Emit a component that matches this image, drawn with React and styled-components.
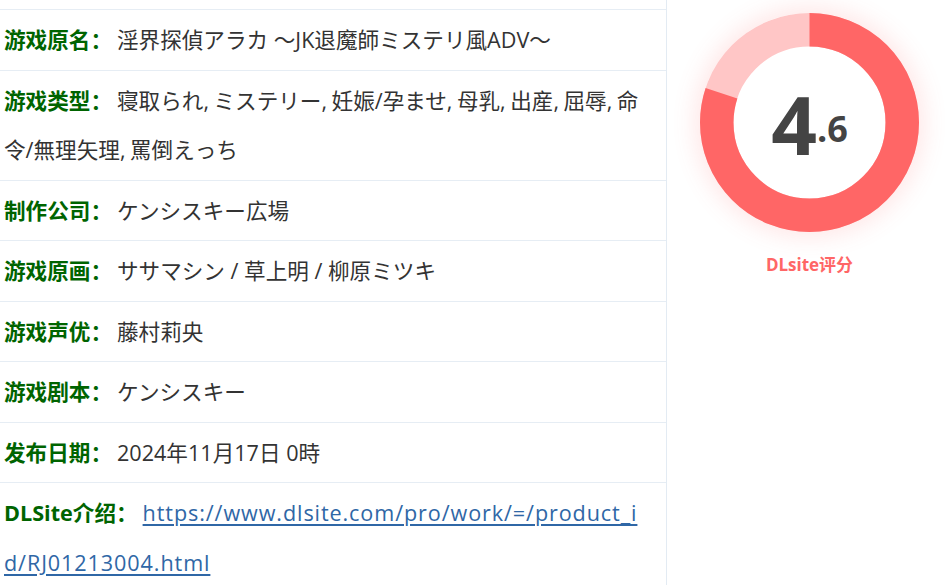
import React from "react";
import styled, { createGlobalStyle } from "styled-components";

const GlobalStyle = createGlobalStyle`
  html, body {
    margin: 0;
    padding: 0;
    background: #ffffff;
  }
  body {
    font-family: "Open Sans", "Noto Sans CJK SC", sans-serif;
  }
`;

const Page = styled.div`
  display: flex;
  align-items: stretch;
  width: 952px;
  min-height: 585px;
`;

const InfoColumn = styled.div`
  width: 666px;
  flex: none;
  padding-top: 9px;
  border-right: 1px solid #e3ebf3;
`;

const Row = styled.div`
  border-top: 1px solid #e6edf4;
  padding: 5px 20px 5px 4px;
  font-size: 21.6px;
  line-height: 49.5px;
  color: #333333;
  word-break: break-all;
`;

const Label = styled.span`
  color: #006400;
  font-weight: 700;
  margin-right: 5px;
`;

const Comma = styled.span`
  margin-right: 4.5px;
`;

const Link = styled.a`
  color: #2f67a6;
  text-decoration: underline;
  text-underline-offset: 3px;
  letter-spacing: 0.9px;
`;

const ScorePanel = styled.div`
  flex: 1;
  display: flex;
  flex-direction: column;
  align-items: center;
  padding-top: 13px;
`;

const Donut = styled.div`
  width: 219px;
  height: 219px;
  border-radius: 50%;
  box-shadow: 0 0 22px 6px rgba(255, 102, 102, 0.15);
  display: grid;
  place-items: center;
  & > * {
    grid-area: 1 / 1;
  }
`;

const ScoreText = styled.div`
  display: flex;
  align-items: baseline;
  color: #444444;
  font-family: "Open Sans", sans-serif;
  font-weight: 700;
  line-height: 1;
  margin-top: 2px;
`;

const Whole = styled.span`
  font-size: 80px;
`;

const Fraction = styled.span`
  font-size: 36px;
  position: relative;
  top: -13px;
`;

const ScoreLabel = styled.div`
  margin-top: 19px;
  color: #ff6666;
  font-size: 17px;
  font-weight: 700;
`;

const genres = [
  "寝取られ",
  "ミステリー",
  "妊娠/孕ませ",
  "母乳",
  "出産",
  "屈辱",
  "命令/無理矢理",
  "罵倒えっち",
];

const rowsBefore = [
  { label: "游戏原名：", value: "淫界探偵アラカ ～JK退魔師ミステリ風ADV～" },
];

const rowsAfter = [
  { label: "制作公司：", value: "ケンシスキー広場" },
  { label: "游戏原画：", value: "ササマシン / 草上明 / 柳原ミツキ" },
  { label: "游戏声优：", value: "藤村莉央" },
  { label: "游戏剧本：", value: "ケンシスキー" },
  { label: "发布日期：", value: "2024年11月17日 0時" },
];

function Ring() {
  const r = 92.75;
  const c = 2 * Math.PI * r;
  const filled = 0.8;
  return (
    <svg width="219" height="219" viewBox="0 0 219 219">
      <g transform="rotate(-90 109.5 109.5)">
        <circle
          cx="109.5"
          cy="109.5"
          r={r}
          fill="none"
          stroke="#ffc6c6"
          strokeWidth="33.5"
        />
        <circle
          cx="109.5"
          cy="109.5"
          r={r}
          fill="none"
          stroke="#ff6666"
          strokeWidth="33.5"
          strokeDasharray={`${c * filled} ${c}`}
        />
      </g>
    </svg>
  );
}

export default function App() {
  return (
    <>
      <GlobalStyle />
      <Page>
        <InfoColumn>
          {rowsBefore.map((r) => (
            <Row key={r.label}>
              <Label>{r.label}</Label>
              {r.value}
            </Row>
          ))}
          <Row>
            <Label>游戏类型：</Label>
            {genres.map((g, i) => (
              <React.Fragment key={g}>
                {g}
                {i < genres.length - 1 && <Comma>,</Comma>}
              </React.Fragment>
            ))}
          </Row>
          {rowsAfter.map((r) => (
            <Row key={r.label}>
              <Label>{r.label}</Label>
              {r.value}
            </Row>
          ))}
          <Row>
            <Label>DLSite介绍：</Label>
            <Link href="#">
              https://www.dlsite.com/pro/work/=/product_id/RJ01213004.html
            </Link>
          </Row>
        </InfoColumn>
        <ScorePanel>
          <Donut>
            <Ring />
            <ScoreText>
              <Whole>4</Whole>
              <Fraction>.6</Fraction>
            </ScoreText>
          </Donut>
          <ScoreLabel>DLsite评分</ScoreLabel>
        </ScorePanel>
      </Page>
    </>
  );
}
